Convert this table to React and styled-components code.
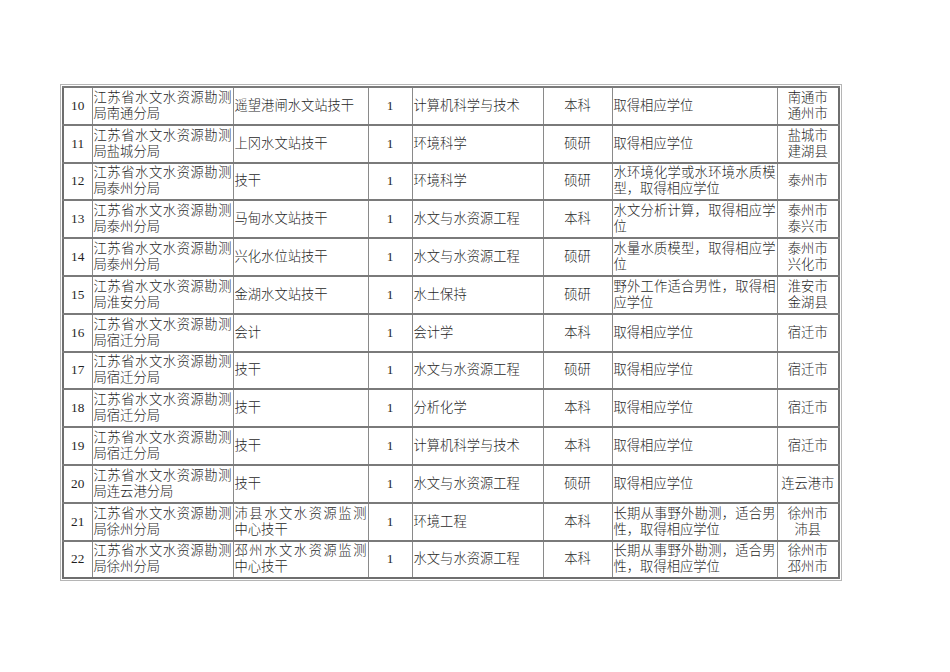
import React from 'react';
import styled, { createGlobalStyle } from 'styled-components';

const GlobalStyle = createGlobalStyle`
  html, body {
    margin: 0;
    padding: 0;
    background: #ffffff;
  }
  body {
    font-family: "Liberation Serif", "Noto Sans CJK SC", serif;
    color: #1a1a1a;
  }
`;

const rows = [
  { no: 10, unit: '江苏省水文水资源勘测局南通分局', post: '遥望港闸水文站技干', major: '计算机科学与技术', degree: '本科', req: '取得相应学位', place: ['南通市', '通州市'] },
  { no: 11, unit: '江苏省水文水资源勘测局盐城分局', post: '上冈水文站技干', major: '环境科学', degree: '硕研', req: '取得相应学位', place: ['盐城市', '建湖县'] },
  { no: 12, unit: '江苏省水文水资源勘测局泰州分局', post: '技干', major: '环境科学', degree: '硕研', req: '水环境化学或水环境水质模型，取得相应学位', place: ['泰州市'] },
  { no: 13, unit: '江苏省水文水资源勘测局泰州分局', post: '马甸水文站技干', major: '水文与水资源工程', degree: '本科', req: '水文分析计算，取得相应学位', place: ['泰州市', '泰兴市'] },
  { no: 14, unit: '江苏省水文水资源勘测局泰州分局', post: '兴化水位站技干', major: '水文与水资源工程', degree: '硕研', req: '水量水质模型，取得相应学位', place: ['泰州市', '兴化市'] },
  { no: 15, unit: '江苏省水文水资源勘测局淮安分局', post: '金湖水文站技干', major: '水土保持', degree: '硕研', req: '野外工作适合男性，取得相应学位', place: ['淮安市', '金湖县'] },
  { no: 16, unit: '江苏省水文水资源勘测局宿迁分局', post: '会计', major: '会计学', degree: '本科', req: '取得相应学位', place: ['宿迁市'] },
  { no: 17, unit: '江苏省水文水资源勘测局宿迁分局', post: '技干', major: '水文与水资源工程', degree: '硕研', req: '取得相应学位', place: ['宿迁市'] },
  { no: 18, unit: '江苏省水文水资源勘测局宿迁分局', post: '技干', major: '分析化学', degree: '本科', req: '取得相应学位', place: ['宿迁市'] },
  { no: 19, unit: '江苏省水文水资源勘测局宿迁分局', post: '技干', major: '计算机科学与技术', degree: '本科', req: '取得相应学位', place: ['宿迁市'] },
  { no: 20, unit: '江苏省水文水资源勘测局连云港分局', post: '技干', major: '水文与水资源工程', degree: '硕研', req: '取得相应学位', place: ['连云港市'] },
  { no: 21, unit: '江苏省水文水资源勘测局徐州分局', post: '沛县水文水资源监测中心技干', major: '环境工程', degree: '本科', req: '长期从事野外勘测，适合男性，取得相应学位', place: ['徐州市', '沛县'] },
  { no: 22, unit: '江苏省水文水资源勘测局徐州分局', post: '邳州水文水资源监测中心技干', major: '水文与水资源工程', degree: '本科', req: '长期从事野外勘测，适合男性，取得相应学位', place: ['徐州市', '邳州市'] },
];

const widths = [29, 141, 135, 44, 131, 69, 165, 62];

const App = () => {
  return (
    <Page>
      <GlobalStyle />
      <Sheet>
        <colgroup>
          {widths.map((w, i) => (
            <col key={i} style={{ width: w }} />
          ))}
        </colgroup>
        <tbody>
          {rows.map((r) => (
            <Row key={r.no}>
              <Cell align="center">{r.no}</Cell>
              <Cell>{r.unit}</Cell>
              <Cell>{r.post}</Cell>
              <Cell align="center">1</Cell>
              <Cell>{r.major}</Cell>
              <Cell align="center">{r.degree}</Cell>
              <Cell>{r.req}</Cell>
              <Cell align="center">
                {r.place.map((p) => (
                  <Line key={p}>{p}</Line>
                ))}
              </Cell>
            </Row>
          ))}
        </tbody>
      </Sheet>
    </Page>
  );
};

const Page = styled.div`
  padding: 86px 0 0 62px;
  width: 950px;
  height: 672px;
  box-sizing: border-box;
`;

const Sheet = styled.table`
  table-layout: fixed;
  border-collapse: collapse;
  width: 777px;
  border: 2px solid #6e6e6e;
  outline: 1px solid #b5b5b5;
  outline-offset: 1px;
`;

const Row = styled.tr`
  height: 37.8px;
`;

const Cell = styled.td`
  padding: 0 1px;
  border-top: 2px solid #7a7a7a;
  border-left: 1px solid #8a8a8a;
  font-size: 13.3px;
  line-height: 16px;
  font-weight: 300;
  color: #1f1f1f;
  text-align: ${(p) => (p.align === 'center' ? 'center' : 'justify')};
  vertical-align: middle;
  overflow: hidden;
  word-break: break-all;
`;

const Line = styled.div`
  line-height: 16px;
`;

export default App;
